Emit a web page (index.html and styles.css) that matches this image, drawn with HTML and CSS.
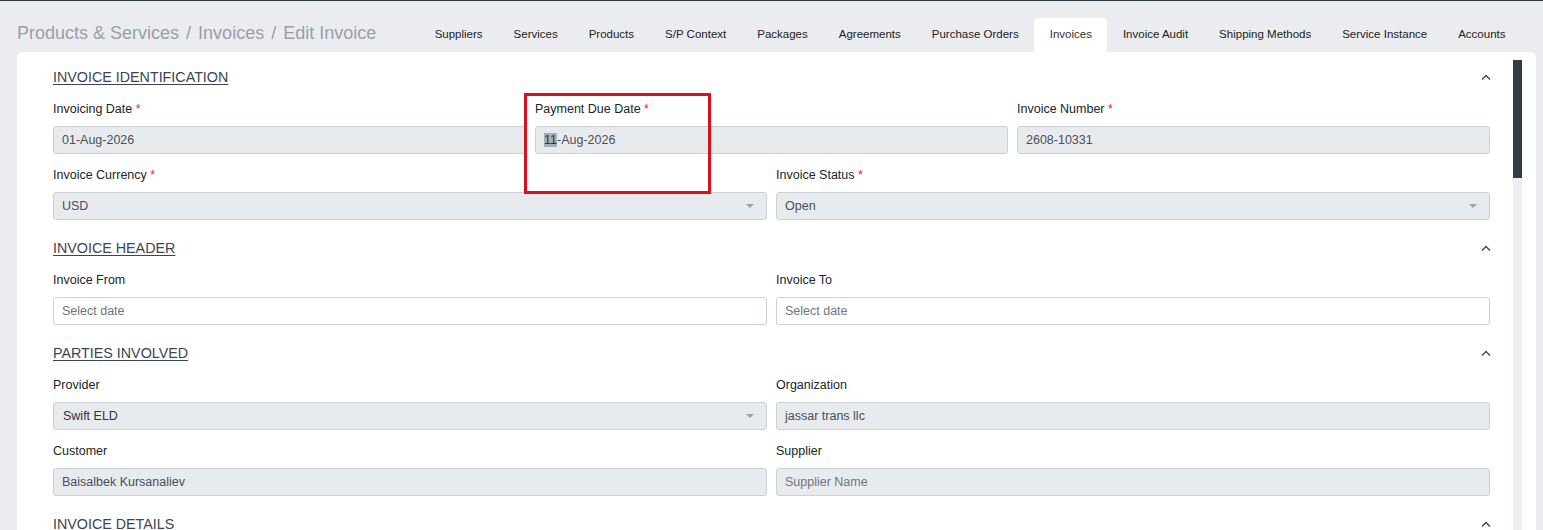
FILE: index.html
```html
<!DOCTYPE html>
<html lang="en">
  <head>
    <meta charset="UTF-8" />
    <title>Edit Invoice</title>
    <link rel="stylesheet" href="styles.css">
  </head>
  <body>
    <div class="topbar">
      <div class="crumbs">
        <span>Products &amp; Services</span>
        <span class="sep">/</span>
        <span>Invoices</span>
        <span class="sep">/</span>
        <span>Edit Invoice</span>
      </div>
      <div class="tabs">
        <div class="tab">Suppliers</div>
        <div class="tab">Services</div>
        <div class="tab">Products</div>
        <div class="tab">S/P Context</div>
        <div class="tab">Packages</div>
        <div class="tab">Agreements</div>
        <div class="tab">Purchase Orders</div>
        <div class="tab active">Invoices</div>
        <div class="tab">Invoice Audit</div>
        <div class="tab">Shipping Methods</div>
        <div class="tab">Service Instance</div>
        <div class="tab">Accounts</div>
      </div>
    </div>

    <div class="card">
      <div class="form">

        <div class="section">
          <div class="sec-head">
            <span class="sec-title">INVOICE IDENTIFICATION</span>
            <svg class="chev" width="10" height="6" viewBox="0 0 10 6"><polyline points="1,5.5 5,1.5 9,5.5" fill="none" stroke="#444" stroke-width="1.3"/></svg>
          </div>
          <div class="row cols3">
            <div class="field">
              <div class="label">Invoicing Date <span class="req">*</span></div>
              <div class="input ro">01-Aug-2026</div>
            </div>
            <div class="field">
              <div class="label">Payment Due Date <span class="req">*</span></div>
              <div class="input ro"><span class="sel">11</span>-Aug-2026</div>
            </div>
            <div class="field">
              <div class="label">Invoice Number <span class="req">*</span></div>
              <div class="input ro">2608-10331</div>
            </div>
          </div>
          <div class="row cols2">
            <div class="field">
              <div class="label">Invoice Currency <span class="req">*</span></div>
              <div class="input ro select">USD<span class="caret"></span></div>
            </div>
            <div class="field">
              <div class="label">Invoice Status <span class="req">*</span></div>
              <div class="input ro select">Open<span class="caret"></span></div>
            </div>
          </div>
        </div>

        <div class="section">
          <div class="sec-head">
            <span class="sec-title">INVOICE HEADER</span>
            <svg class="chev" width="10" height="6" viewBox="0 0 10 6"><polyline points="1,5.5 5,1.5 9,5.5" fill="none" stroke="#444" stroke-width="1.3"/></svg>
          </div>
          <div class="row cols2">
            <div class="field">
              <div class="label">Invoice From</div>
              <div class="input ph">Select date</div>
            </div>
            <div class="field">
              <div class="label">Invoice To</div>
              <div class="input ph">Select date</div>
            </div>
          </div>
        </div>

        <div class="section">
          <div class="sec-head">
            <span class="sec-title">PARTIES INVOLVED</span>
            <svg class="chev" width="10" height="6" viewBox="0 0 10 6"><polyline points="1,5.5 5,1.5 9,5.5" fill="none" stroke="#444" stroke-width="1.3"/></svg>
          </div>
          <div class="row cols2">
            <div class="field">
              <div class="label">Provider</div>
              <div class="input ro select dark">Swift ELD<span class="caret"></span></div>
            </div>
            <div class="field">
              <div class="label">Organization</div>
              <div class="input ro">jassar trans llc</div>
            </div>
          </div>
          <div class="row cols2">
            <div class="field">
              <div class="label">Customer</div>
              <div class="input ro">Baisalbek Kursanaliev</div>
            </div>
            <div class="field">
              <div class="label">Supplier</div>
              <div class="input ro ph">Supplier Name</div>
            </div>
          </div>
        </div>

        <div class="section">
          <div class="sec-head">
            <span class="sec-title">INVOICE DETAILS</span>
            <svg class="chev" width="10" height="6" viewBox="0 0 10 6"><polyline points="1,5.5 5,1.5 9,5.5" fill="none" stroke="#444" stroke-width="1.3"/></svg>
          </div>
        </div>

      </div>
      <div class="scrollbar">
        <div class="thumb"></div>
      </div>
    </div>

    <div class="callout"></div>
  </body>
</html>
```

FILE: styles.css
```css
html, body {
  margin: 0;
  height: 100%;
}

body {
  background: #ebecf0;
  border-top: 1px solid #2d3441;
  box-sizing: border-box;
  font-family: "Liberation Sans", Arial, sans-serif;
  color: #212529;
  overflow: hidden;
  position: relative;
}

.topbar {
  display: flex;
  justify-content: space-between;
  align-items: flex-end;
  height: 51px;
  padding: 0 22px 0 17px;
}
.crumbs {
  line-height: 34px;
  margin-bottom: 2px;
  font-size: 18px;
  color: #9a9ea8;
}
.crumbs .sep {
  margin: 0 2px;
}

.tabs {
  display: flex;
}
.tab {
  height: 34px;
  line-height: 32px;
  padding: 0 15.5px;
  font-size: 11.5px;
  color: #222;
  border-radius: 4px 4px 0 0;
}
.tab.active {
  background: #fff;
  color: #333;
}

.card {
  display: flex;
  background: #fff;
  margin: 0 7px 0 17px;
  height: calc(100% - 51px);
  border-radius: 6px 6px 0 0;
  overflow: hidden;
}
.form {
  flex: 1;
  padding: 15px 22px 0 36px;
}
.scrollbar {
  width: 9px;
  margin: 8px 14px 0 0;
  background: #ebeef2;
}
.thumb {
  height: 118px;
  background: #343a46;
}

.section {
  padding-bottom: 7px;
}
.sec-head {
  display: flex;
  justify-content: space-between;
  align-items: center;
  height: 20px;
  margin-bottom: 12px;
}
.sec-title {
  font-size: 14.3px;
  color: #3e4452;
  text-decoration: underline;
  text-underline-offset: 2px;
}

.row {
  display: grid;
  column-gap: 9px;
  margin-right: 1px;
}
.cols3 {
  grid-template-columns: 1fr 1fr 1fr;
}
.cols2 {
  grid-template-columns: 1fr 1fr;
}
.field {
  margin-bottom: 11px;
}
.label {
  font-size: 12.5px;
  line-height: 19px;
  padding-top: 1px;
  margin-bottom: 7px;
  color: #212529;
}
.req {
  color: #e8222e;
}

.input {
  position: relative;
  height: 28px;
  line-height: 26px;
  box-sizing: border-box;
  border: 1px solid #ccd1d8;
  border-radius: 3px;
  padding: 0 8px;
  font-size: 12.5px;
  color: #495057;
  background: #fff;
}
.input.ro {
  background: #e8ebee;
}
.input.ph {
  color: #70767d;
}
.input.dark {
  color: #333;
  padding-left: 9px;
}
.sel {
  background: #a9adb2;
  color: #333;
}
.caret {
  position: absolute;
  right: 12px;
  top: 11px;
  border-left: 4px solid transparent;
  border-right: 4px solid transparent;
  border-top: 4px solid #9ea2a7;
}

.callout {
  position: absolute;
  left: 524px;
  top: 92px;
  width: 181px;
  height: 95px;
  border: 3px solid #dc0f1c;
}
```
